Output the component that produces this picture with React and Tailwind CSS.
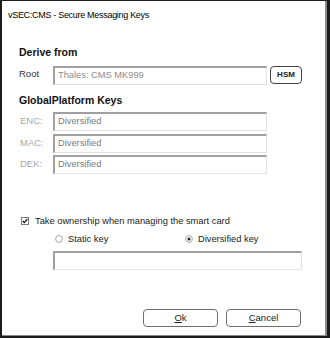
import React from 'react'

const font = { fontFamily: '"Liberation Sans", Arial, sans-serif' }

function Field({ value, className = '' }) {
  return (
    <div
      className={`h-[19px] w-[214px] bg-white border-t-2 border-l-2 border-[#a0a0a0] border-r border-b border-r-[#e3e3e3] border-b-[#e3e3e3] pl-[3px] pt-[1px] text-[9.3px] leading-[12px] text-[#7a7a7a] ${className}`}
    >
      {value}
    </div>
  )
}

function KeyRow({ label, value }) {
  return (
    <div className="flex items-center">
      <span className="w-[34px] pl-[1px] text-[9.5px] text-[#a8a8a8]">{label}</span>
      <Field value={value} />
    </div>
  )
}

function Radio({ checked, label }) {
  return (
    <div className="flex items-center gap-[5px]">
      <svg width="8" height="8" viewBox="0 0 8 8">
        <circle cx="4" cy="4" r="3.4" fill="white" stroke="#9a9a9a" strokeWidth="0.9" />
        {checked && <circle cx="4" cy="4" r="1.5" fill="#222" />}
      </svg>
      <span className="text-[9.3px] leading-[12px] text-[#222]">{label}</span>
    </div>
  )
}

function Button({ first, rest }) {
  return (
    <button className="h-[18px] w-[75px] rounded-[4px] border border-[#6e6e6e] bg-white text-[9.5px] leading-[12px] text-[#222]">
      <span className="underline">{first}</span>
      {rest}
    </button>
  )
}

export default function App() {
  return (
    <div className="w-[330px] h-[338px] bg-[#1c1c1c] pl-[2px] pt-[1px] pr-[3px] pb-[2px]" style={font}>
      <div className="h-full bg-white border-r-2 border-b border-[#8a8a8a] flex flex-col">
        <div className="mt-[8px] pl-[6px] text-[9px] leading-[12px] tracking-[-0.3px] text-black">
          vSEC:CMS - Secure Messaging Keys
        </div>

        <div className="pl-[17px] flex flex-col">
          <h2 className="mt-[25px] text-[10.5px] leading-[13px] font-bold text-[#111]">Derive from</h2>

          <div className="mt-[7px] flex items-start h-[18px]">
            <span className="w-[34px] h-[17px] flex items-center text-[9.5px] text-[#333]">Root</span>
            <Field value="Thales: CMS MK999" className="h-[17px] text-[#8c8c8c]" />
            <button className="ml-[3px] h-[18px] w-[32px] rounded-[4px] border border-[#444] bg-white text-[8px] font-bold text-[#222] leading-[10px]">
              HSM
            </button>
          </div>

          <h2 className="mt-[10px] text-[10.5px] leading-[13px] font-bold text-[#111]">GlobalPlatform Keys</h2>

          <div className="mt-[5px] flex flex-col gap-[2.5px]">
            <KeyRow label="ENC:" value="Diversified" />
            <KeyRow label="MAC:" value="Diversified" />
            <KeyRow label="DEK:" value="Diversified" />
          </div>

          <div className="mt-[41px] flex items-center h-[12px]">
            <svg width="8" height="8" viewBox="0 0 8 8" className="ml-[2px]">
              <rect x="0.5" y="0.5" width="7" height="7" fill="white" stroke="#7a7a7a" />
              <path d="M1.8 4 L3.3 5.6 L6.3 2.2" fill="none" stroke="#111" strokeWidth="1.3" />
            </svg>
            <span className="ml-[6px] text-[9.3px] leading-[12px] text-[#222]">
              Take ownership when managing the smart card
            </span>
          </div>

          <div className="mt-[6px] flex items-center h-[12px] pl-[36px]">
            <div className="w-[130px]">
              <Radio label="Static key" />
            </div>
            <Radio checked label="Diversified key" />
          </div>

          <div className="mt-[6px] pl-[34px]">
            <Field value="" className="w-[249px] h-[18px]" />
          </div>

          <div className="mt-[39px] flex justify-end gap-[8px] pr-[24px]">
            <Button first="O" rest="k" />
            <Button first="C" rest="ancel" />
          </div>
        </div>
      </div>
    </div>
  )
}
